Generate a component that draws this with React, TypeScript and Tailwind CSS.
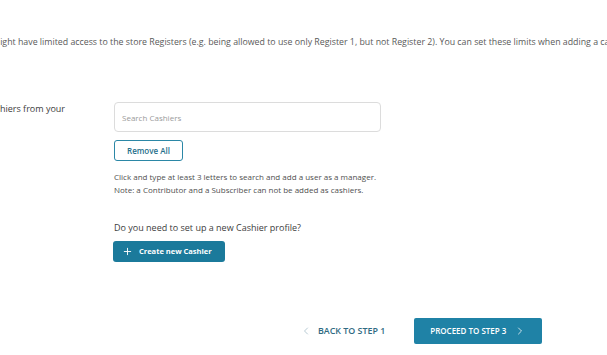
import { ChevronLeft, ChevronRight, Plus } from "lucide-react";

const FONT = { fontFamily: '"Open Sans", "Noto Sans", sans-serif' };

export default function App() {
  return (
    <div
      style={FONT}
      className="relative h-[355px] w-[607px] overflow-hidden bg-white text-[#4a4a4a]"
    >
      <p className="ml-[-8px] mt-[36px] whitespace-nowrap text-[8.8px] leading-[12px] text-[#5a5a5a]">
        might have limited access to the store Registers (e.g. being allowed to use only Register 1, but not Register 2). You can set these limits when adding a cashier.
      </p>

      <div className="mt-[54px] flex">
        <div className="w-[114px] shrink-0 overflow-hidden">
          <p className="ml-[-15px] mt-[1px] whitespace-nowrap text-[9px] leading-[12px] text-[#3d3d3d]">
            Cashiers from your
          </p>
        </div>
        <div className="flex w-[267px] flex-col">
          <input
            placeholder="Search Cashiers"
            className="h-[30px] w-full rounded-[4px] border border-[#dcdcdc] px-[7px] text-[8px] text-[#555] outline-none placeholder:text-[#9a9a9a]"
          />
          <button className="mt-[8px] h-[21px] w-[69px] rounded-[3px] border border-[#2b87a6] text-[8px] font-semibold text-[#1f6f8b]">
            Remove All
          </button>
          <p className="mt-[9px] whitespace-nowrap text-[8px] leading-[13px] text-[#4f4f4f]">
            Click and type at least 3 letters to search and add a user as a manager.
            <br />
            Note: a Contributor and a Subscriber can not be added as cashiers.
          </p>
          <p className="mt-[26px] text-[9px] leading-[12px] text-[#3d3d3d]">
            Do you need to set up a new Cashier profile?
          </p>
          <button className="ml-[-1px] mt-[7px] flex h-[21px] w-[112px] items-center gap-[6px] rounded-[3px] bg-[#1b7a9b] pl-[9px] text-[7.5px] font-bold text-white">
            <Plus size={11} strokeWidth={2} />
            Create new Cashier
          </button>
        </div>
      </div>

      <div className="mt-[56px] flex items-center">
        <div className="ml-[300px] flex items-center gap-[6px] text-[8.9px] font-semibold text-[#2f6a82]">
          <ChevronLeft size={12} strokeWidth={1.5} className="text-[#9fb8c4]" />
          BACK TO STEP 1
        </div>
        <button className="ml-[29px] flex h-[26px] w-[128px] items-center justify-center gap-[8px] rounded-[2px] bg-[#1f82a6] text-[8px] font-semibold text-white">
          PROCEED TO STEP 3
          <ChevronRight size={12} strokeWidth={1.5} />
        </button>
      </div>
    </div>
  );
}
